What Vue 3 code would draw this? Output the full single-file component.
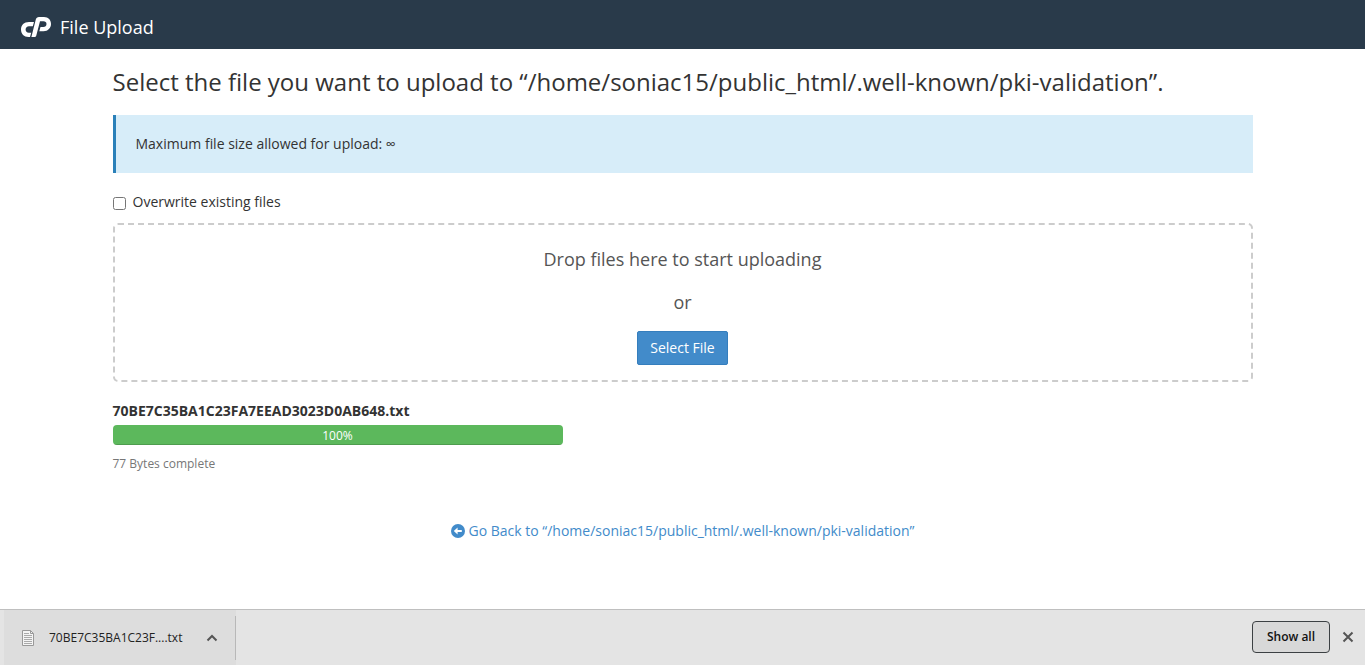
<script setup>
import { ref } from 'vue'

const directory = '/home/soniac15/public_html/.well-known/pki-validation'
const overwrite = ref(false)
const upload = { name: '70BE7C35BA1C23FA7EEAD3023D0AB648.txt', percent: 100, status: '77 Bytes complete' }
</script>

<template>
  <div class="page">
    <header class="topbar">
      <svg class="logo" viewBox="0 0 30 20" aria-hidden="true">
        <path d="M13 5H8C3 5 0 8 0 12.5S3 20 7.5 20H9L10.2 15.7H7.8C5.8 15.7 4.6 14.4 4.6 12.5S6 9.3 8 9.3H11.8Z" />
        <path d="M10.4 20L14.8 2.6C15.2 1 16.3 0 18 0H23C27.5 0 30 3 30 7S27 14.2 22.5 14.2H18.3L19.5 10H22.3C24.3 10 25.5 8.8 25.5 7S24.3 4.3 22.5 4.3H19L15.3 18.4C15 19.5 14.3 20 13.2 20Z" />
      </svg>
      <span class="title">File Upload</span>
    </header>

    <main class="container">
      <h1>Select the file you want to upload to “{{ directory }}”.</h1>
      <div class="callout">Maximum file size allowed for upload: ∞</div>

      <div class="option">
        <input id="overwrite" v-model="overwrite" type="checkbox" />
        <label for="overwrite">Overwrite existing files</label>
      </div>

      <section class="dropzone">
        <p>Drop files here to start uploading</p>
        <p>or</p>
        <button type="button" class="select">Select File</button>
      </section>

      <section class="upload">
        <div class="filename">{{ upload.name }}</div>
        <div class="progress" role="progressbar" :aria-valuenow="upload.percent" aria-valuemin="0" aria-valuemax="100">
          <div class="bar" :style="{ width: upload.percent + '%' }">{{ upload.percent }}%</div>
        </div>
        <div class="status">{{ upload.status }}</div>
      </section>

      <div class="back">
        <a href="#">
          <svg viewBox="0 0 14 14" aria-hidden="true">
            <circle cx="7" cy="7" r="7" fill="#428bca" />
            <path d="M2.8 7L6.6 3.4V6H10.8V8H6.6V10.6Z" fill="#fff" />
          </svg>
          <span>Go Back to “{{ directory }}”</span>
        </a>
      </div>
    </main>

    <footer class="shelf">
      <div class="item">
        <svg class="doc" viewBox="0 0 12 16" aria-hidden="true">
          <path d="M.5 .5H8.5L11.5 3.5V15.5H.5Z" fill="#f4f4f4" stroke="#999" />
          <path d="M8.5 .5V3.5H11.5" fill="none" stroke="#999" />
          <path d="M2 3.5H7M2 5.5H10M2 7.5H10M2 9.5H10M2 11.5H10M2 13.5H10" stroke="#aaa" />
        </svg>
        <span class="short">70BE7C35BA1C23F....txt</span>
        <button type="button" class="icon" aria-label="Download options">
          <svg viewBox="0 0 12 12" aria-hidden="true"><path d="M1.5 8.5L6 4L10.5 8.5" /></svg>
        </button>
      </div>
      <button type="button" class="showall">Show all</button>
      <button type="button" class="icon close" aria-label="Close">
        <svg viewBox="0 0 12 12" aria-hidden="true"><path d="M1.5 1.5L10.5 10.5M10.5 1.5L1.5 10.5" /></svg>
      </button>
    </footer>
  </div>
</template>

<style>
body {
  margin: 0;
}
</style>

<style scoped>
.page {
  display: flex;
  flex-direction: column;
  min-height: 100vh;
  background: #fff;
  color: #333;
  font: 14px/20px "Open Sans", "Noto Sans", sans-serif;
}
.page * {
  box-sizing: border-box;
}
button {
  font: inherit;
}
.topbar {
  display: flex;
  align-items: center;
  gap: 9px;
  padding: 5px 21px 0;
  height: 49px;
  background: #293a4a;
  color: #fff;
}
.logo {
  width: 30px;
  height: 20px;
  fill: #fff;
}
.title {
  font-size: 18px;
  line-height: 24px;
}
.container {
  flex: 1;
  width: 100%;
  max-width: 1140px;
  margin: 0 auto;
}
h1 {
  margin: 19px 0 20px;
  font-size: 24px;
  font-weight: 400;
  line-height: 27px;
}
.callout {
  padding: 19px 20px;
  border-left: 3px solid #2a80b9;
  background: #d7edf9;
}
.option {
  display: flex;
  align-items: center;
  gap: 7px;
  margin: 19px 0 11px;
}
.option input {
  width: 13px;
  height: 13px;
  margin: 3px 0 0;
}
.dropzone {
  display: flex;
  flex-direction: column;
  align-items: center;
  padding: 21px 20px 15px;
  border: 2px dashed #ccc;
  border-radius: 5px;
  color: #555;
  font-size: 18px;
  line-height: 26px;
}
.dropzone p {
  margin: 0 0 17px;
}
.dropzone p + p {
  margin-bottom: 16px;
}
.select {
  height: 34px;
  padding: 0 12px;
  border: 1px solid #357ebd;
  border-radius: 2px;
  background: #428bca;
  color: #fff;
  font-size: 14px;
  line-height: 20px;
}
.upload {
  width: 450px;
  max-width: 100%;
  margin-top: 19px;
}
.filename {
  font-weight: 700;
}
.progress {
  height: 20px;
  margin: 4px 0 9px;
  overflow: hidden;
  border-radius: 4px;
  background: #f5f5f5;
}
.bar {
  height: 100%;
  background: #5cb85c;
  box-shadow: inset 0 -1px 0 rgba(0, 0, 0, 0.15);
  color: #fff;
  font-size: 12px;
  line-height: 22px;
  text-align: center;
}
.status {
  color: #777;
  font-size: 12px;
}
.back {
  margin: 47px 0;
  text-align: center;
}
.back a {
  display: inline-flex;
  align-items: center;
  gap: 4px;
  color: #428bca;
  text-decoration: none;
}
.back svg {
  width: 14px;
  height: 14px;
}
.shelf {
  display: flex;
  align-items: center;
  height: 56px;
  padding: 0 11px 0 4px;
  border-top: 1px solid #bfbfbf;
  background: #e4e4e4;
  color: #222;
  font-size: 12px;
}
.item {
  display: flex;
  align-items: center;
  align-self: stretch;
  margin-right: auto;
  padding: 0 18px;
  background: linear-gradient(#b8b8b8, #b8b8b8) right center / 1px 44px no-repeat #ddd;
}
.doc {
  width: 12px;
  height: 16px;
  margin-right: 15px;
}
.short {
  margin-right: 24px;
}
.icon {
  display: flex;
  padding: 0;
  border: 0;
  background: none;
}
.icon svg {
  width: 12px;
  height: 12px;
  fill: none;
  stroke: #555;
  stroke-width: 2;
}
.showall {
  height: 32px;
  width: 78px;
  margin-bottom: 2px;
  padding: 0;
  border: 1px solid #3c4043;
  border-radius: 4px;
  background: #d8d8d8;
  color: #111;
  font-weight: 600;
}
.close {
  margin: 0 0 2px 12px;
}
</style>
